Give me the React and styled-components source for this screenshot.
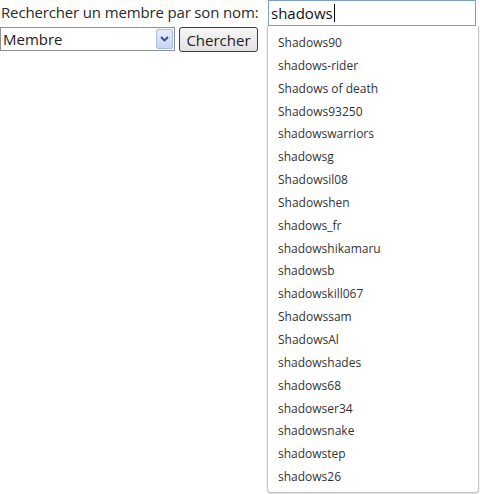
import React from 'react';
import styled, { createGlobalStyle } from 'styled-components';

const members = [
  'Shadows90', 'shadows-rider', 'Shadows of death', 'Shadows93250', 'shadowswarriors',
  'shadowsg', 'Shadowsil08', 'Shadowshen', 'shadows_fr', 'shadowshikamaru',
  'shadowsb', 'shadowskill067', 'Shadowssam', 'ShadowsAl', 'shadowshades',
  'shadows68', 'shadowser34', 'shadowsnake', 'shadowstep', 'shadows26',
];

function App() {
  return (
    <>
      <GlobalStyle />
      <Page>
        <SearchForm>
          <Label>Rechercher un membre par son nom:</Label>
          <Controls>
            <SelectBox>
              <span>Membre</span>
              <Arrow>
                <svg width="9" height="6" viewBox="0 0 9 6">
                  <path d="M1 1 L4.5 4.5 L8 1" fill="none" stroke="#2d4f86" strokeWidth="1.8" />
                </svg>
              </Arrow>
            </SelectBox>
            <Button>Chercher</Button>
          </Controls>
        </SearchForm>
        <Field>
          <Input>
            shadows<Caret />
          </Input>
          <Suggestions>
            {members.map(name => (
              <Item key={name}>{name}</Item>
            ))}
          </Suggestions>
        </Field>
      </Page>
    </>
  );
}

const GlobalStyle = createGlobalStyle`
  body {
    margin: 0;
    background: #fff;
    font-family: "Open Sans", "DejaVu Sans", sans-serif;
    color: #222;
  }
`;

const Page = styled.div`
  width: 480px;
  height: 494px;
  display: flex;
  align-items: flex-start;
  gap: 9px;
`;

const SearchForm = styled.div`
  display: flex;
  flex-direction: column;
  width: 258px;
`;

const Label = styled.div`
  padding: 3px 0 0 1px;
  height: 23px;
  box-sizing: border-box;
  font-size: 15px;
  line-height: 19px;
  letter-spacing: -0.15px;
  color: #2a2a2a;
  white-space: nowrap;
`;

const Controls = styled.div`
  display: flex;
  align-items: flex-start;
  gap: 4px;
  padding-top: 4px;
`;

const SelectBox = styled.div`
  box-sizing: border-box;
  width: 175px;
  height: 24px;
  border: 1px solid #8e8f8f;
  display: flex;
  align-items: center;
  justify-content: space-between;
  padding: 0 1px 0 2px;
  font-size: 15px;
  color: #222;
`;

const Arrow = styled.div`
  box-sizing: border-box;
  width: 17px;
  height: 20px;
  border: 1px solid #a8bde0;
  border-radius: 2px;
  background: linear-gradient(#e4ecfb, #c6d6f4);
  display: flex;
  align-items: center;
  justify-content: center;
`;

const Button = styled.div`
  box-sizing: border-box;
  width: 79px;
  height: 25px;
  border: 1px solid #3c3c3c;
  border-radius: 3px;
  background: linear-gradient(#f6f6f6, #e2e2e2);
  display: flex;
  align-items: center;
  justify-content: center;
  font-size: 15px;
  color: #222;
`;

const Field = styled.div`
  position: relative;
  width: 212px;
`;

const Input = styled.div`
  box-sizing: border-box;
  width: 208px;
  height: 26px;
  margin-left: 1px;
  border: 1px solid #7f9db9;
  display: flex;
  align-items: center;
  padding-left: 2px;
  font-size: 15px;
  color: #111;
`;

const Caret = styled.span`
  display: inline-block;
  width: 1px;
  height: 18px;
  background: #000;
  margin-left: 1px;
`;

const Suggestions = styled.ul`
  position: absolute;
  top: 26px;
  left: 0;
  box-sizing: border-box;
  width: 212px;
  height: 467px;
  margin: 0;
  padding: 6px 0 0 10px;
  list-style: none;
  background: #fff;
  border: 1px solid #c4c4c4;
  border-top: none;
  border-radius: 0 0 4px 4px;
  box-shadow: 0 1px 2px rgba(0, 0, 0, 0.15);
`;

const Item = styled.li`
  height: 22.85px;
  line-height: 22.85px;
  font-size: 12px;
  color: #333;
  white-space: nowrap;
`;

export default App;
